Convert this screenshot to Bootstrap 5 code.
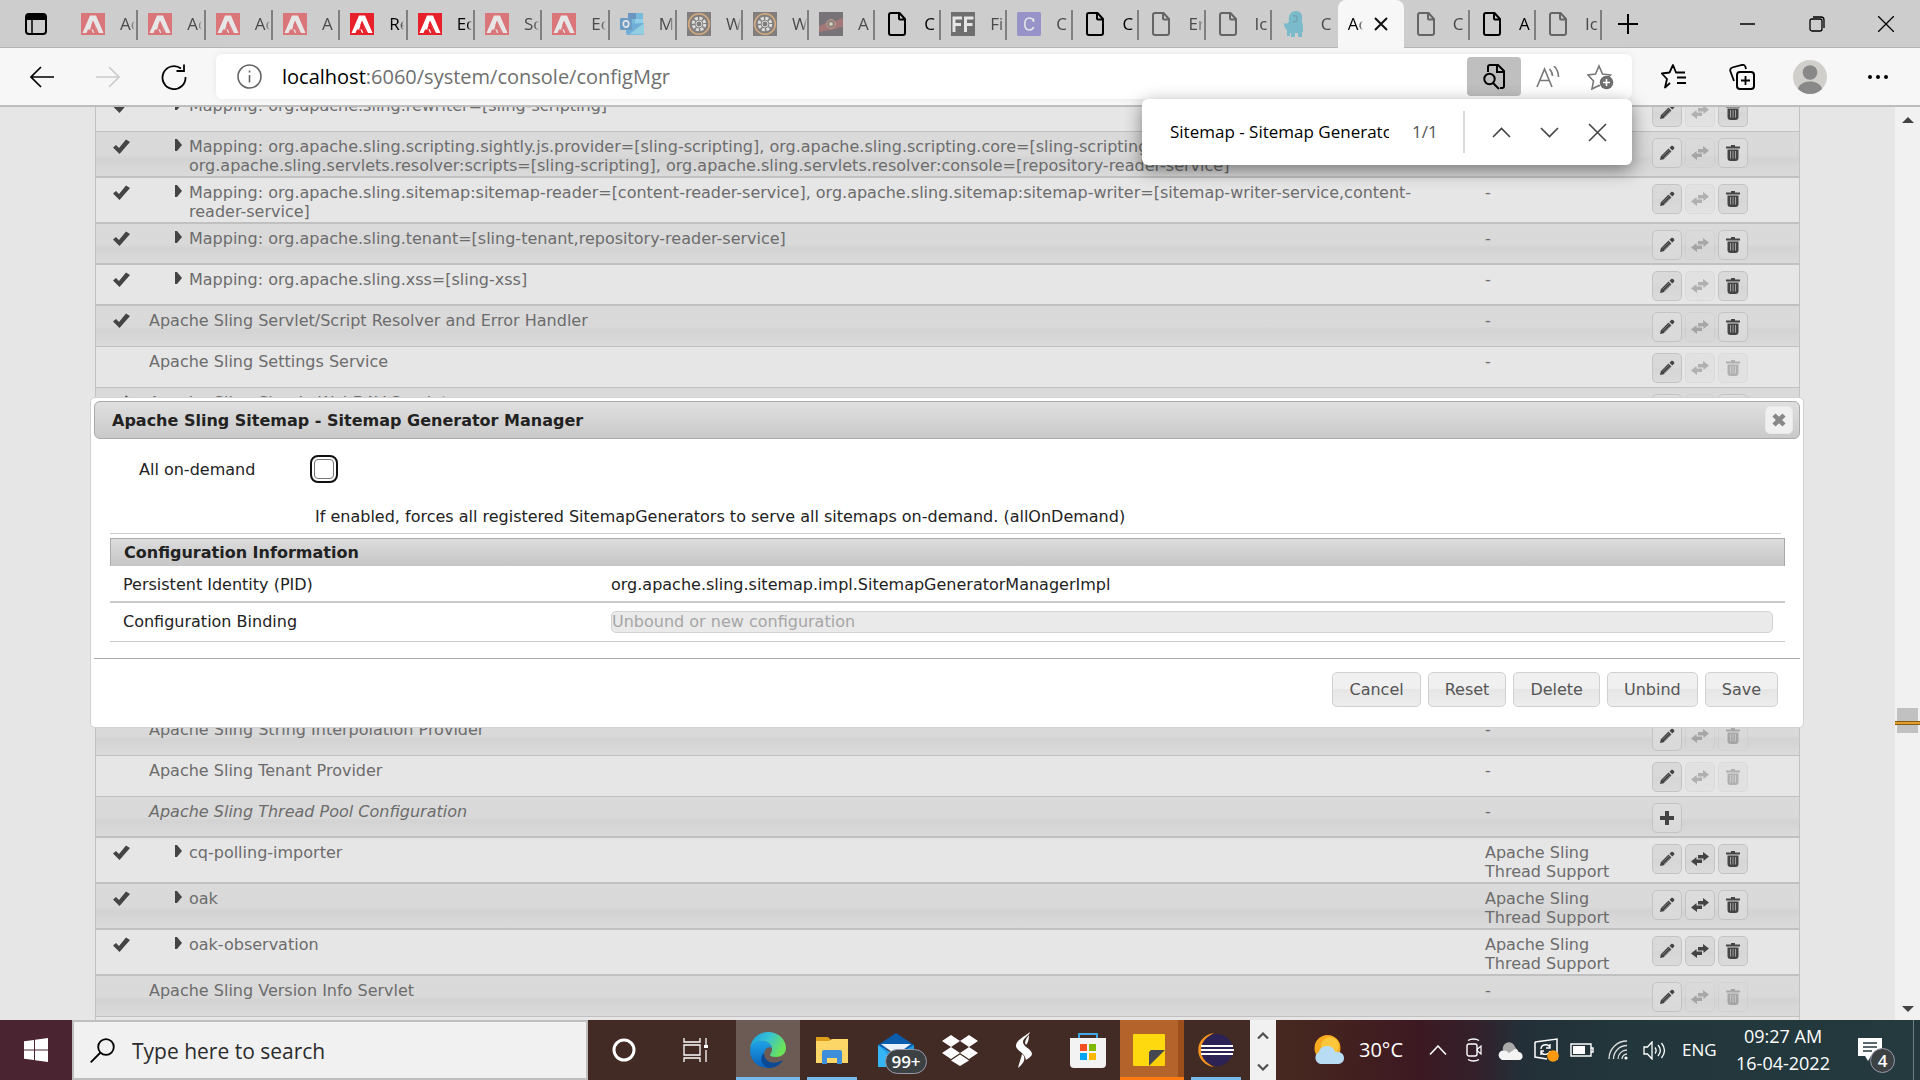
<!DOCTYPE html>
<html lang="en">
<head>
<meta charset="utf-8">
<meta name="viewport" content="width=device-width, initial-scale=1">
<title>Adobe Experience Manager Web Console - Configuration</title>
<link href="https://cdn.jsdelivr.net/npm/bootstrap@5.3.0/dist/css/bootstrap.min.css" rel="stylesheet">
<style>
:root{--ui:"Open Sans","Noto Sans",sans-serif;--console:"DejaVu Sans",Verdana,sans-serif}
body{font-family:var(--ui);overflow:hidden;background:#e6e6e6;color:#1b1b1b}
button{font-family:inherit}
svg{display:block;flex:none}
/* tab strip */
.tabstrip{height:48px;background:#cdcdcd;border-bottom:1px solid #b4b4b4}
.strip-menu{width:71px;padding-left:25px}
.tabs-a{width:31.56%}
.tabs-b{width:48.18%}
.tabitem{flex:1 1 0;min-width:0;height:47px;border:0;background:none;padding:0 0 0 10px;position:relative;font-size:17px;color:#000;text-align:left}
.tabitem::after{content:"";position:absolute;right:0;top:10px;width:2px;height:30px;background:#808080}
.tabitem.nosep::after{display:none}
.tabitem .ico{width:24px;height:24px;display:flex;justify-content:center;align-items:center}
.tabitem .cap{width:15px;margin-left:15px;overflow:hidden;white-space:nowrap;line-height:26px;-webkit-mask-image:linear-gradient(90deg,#000 70%,transparent);mask-image:linear-gradient(90deg,#000 70%,transparent)}
.tabitem.asleep .ico{opacity:.5}
.tabitem.asleep .cap{color:#4a4a4a}
.tabitem.current{background:#f7f7f7;border-radius:8px 8px 0 0;height:48px}
.tabitem.current .cap{margin-left:0;margin-right:11px}
.winbtn{width:69px;border:0;background:none;padding:0}
/* toolbar */
.toolbar{height:59px;background:#f7f7f7;border-bottom:2px solid #bdbdbd;padding:0 8px 0 9px}
.toolbtn{width:66px;height:44px;border:0;background:none;padding:0;display:flex;align-items:center;justify-content:center}
.toolbtn.roomy{width:68px}
.addr{height:45px;background:#fff;border-radius:6px;box-shadow:0 0 6px #e9e9e9;margin:0 8px 0 9px;padding:0 5px 0 21px}
.addr .url{font-size:20px;color:#6f6f6f;margin-left:20px}
.addr .url b{font-weight:400;color:#000}
.addr .find-on{width:54px;height:39px;background:#bfbfbf;border-radius:4px}
.addr .toolbtn.slim{width:53px}
.findbar{position:absolute;z-index:20;right:288px;top:99px;width:490px;height:66px;background:#fff;border-radius:6px;box-shadow:0 5px 18px rgba(0,0,0,.45);padding-left:28px}
.findbar input{width:219px;border:0;padding:0;font-size:17px;color:#000;outline:0}
.findbar .count{width:51px;margin-left:23px;font-size:17px;color:#555}
.findbar .rule{width:2px;height:42px;background:#d9d9d9;margin-right:12px}
.findbar button{width:48px;height:40px;border:0;background:none;padding:0;display:flex;align-items:center;justify-content:center}
/* console page */
.viewport{min-height:0;overflow:hidden}
.pagearea{padding:0 95px;font-family:var(--console);min-width:0}
.conf{table-layout:fixed;width:100%;margin-top:-16px;border-collapse:separate;border-spacing:0;border:solid #c2c2c2;border-width:0 1px;font-size:16px;line-height:19px;color:#6c6c6c}
.conf td{height:41px;padding:5px 0 0;vertical-align:top;border-bottom:1px solid #c0c0c0}
.conf .thick td{border-bottom-width:2px}
.conf .tall td{height:46px}
.conf .alt{background:linear-gradient(#dadada 0,#d9d9d9 50%,#d3d3d3 58%,#dbdbdb 100%)}
.conf td.gap{height:286px}
.conf .c0{width:53px}.conf .c2{width:167px}.conf .c3{width:147px}
.conf td:first-child svg{margin:2px 0 0 17px}
.conf .map{padding-left:40px;position:relative}
.conf .map svg{position:absolute;left:26px;top:7px}
.acts{gap:3px;padding-top:1px;margin-bottom:-2px}
.acts button{width:30px;height:30px;padding:0;border:1px solid #c3c3c3;border-radius:5px;background:linear-gradient(#d9d9d9 50%,#d5d5d5 50%,#dbdbdb);color:#444;display:flex;align-items:center;justify-content:center}
.alt .acts button{background:linear-gradient(#dddddd,#d9d9d9)}
.acts button:disabled{opacity:.33}
/* editor dialog */
.editor{position:absolute;z-index:5;left:90px;right:91px;top:290px;background:#fff;border:1px solid #d2d2d2;border-radius:5px;padding:3px;font-size:16px;line-height:20px;color:#222}
.editor-head{height:38px;border:1px solid #aaa;border-radius:6px;background:linear-gradient(#e0e0e0,#c9c9c9);padding:0 6px 0 17px}
.editor-head h1{font-size:16px;font-weight:700;margin:0;padding-top:2px;line-height:20px}
.editor-head button{width:28px;height:28px;padding:0;border:1px solid #e8e8e8;border-radius:5px;background:#f0f0f0;color:#888;display:flex;align-items:center;justify-content:center}
.editor-body{margin:0 15px 0 16px;height:219px}
.opt{height:95px;margin-right:4px;border-bottom:1px solid #ccc;display:grid;grid-template-columns:171px 1fr;grid-template-rows:60px 34px;align-items:center;padding-left:29px}
.opt label{padding-top:2px}
.opt p{grid-column:2;margin:0 0 0 5px;padding-top:2px}
.opt input{appearance:none;width:20px;height:20px;margin:0 0 0 4px;border:1px solid #767676;border-radius:4px;background:#fff;outline:2px solid #111;outline-offset:2px;display:block}
.info{width:100%;table-layout:fixed;border-collapse:separate;border-spacing:0;margin-top:4px}
.info .key{width:500px}
.info th{height:28px;background:linear-gradient(#dcdcdc,#c6c6c6);border:solid #aaa;border-width:1px 1px 0;padding:0 0 0 13px}
.info td{border-bottom:2px solid #cacaca;padding:2px 12px 0 13px;height:37px}
.info tr:last-child td{border-bottom-width:1px;height:39px;padding-top:0}
.info td:last-child{padding-left:1px}
.info select{appearance:none;display:block;width:100%;height:22px;border:1px solid #d3d3d3;border-radius:5px;background:#eaeaea;color:#a6a6a6;opacity:1;padding:0;font:16px/20px var(--console)}
.editor-foot{height:66px;border-top:1px solid #aaa;padding:13px 22px 0 0;gap:7px}
.editor-foot button{height:35px;padding:0 16px;border:1px solid #d0d0d0;border-radius:5px;background:linear-gradient(#f0f0f0 50%,#e6e6e6 50%,#ededed);color:#555;font-size:16px}
/* page scrollbar */
.sbar{width:25px;background:#f1f1f1;position:relative}
.sbar .thumb{position:absolute;left:2px;right:2px;top:601px;height:25px;background:#c1c1c1}
.sbar .hit{position:absolute;left:0;right:0;top:614px;height:4px;background:#e0a030;border:solid #8a5a10;border-width:1px 0}
/* taskbar */
.taskbar{height:60px;background:#432b25;color:#fff;z-index:10}
.start{width:72px;border:0;background:#4a2430;padding:0;display:flex;align-items:center;justify-content:center}
.search{width:516px;background:#f1f1f1;border:2px solid #bfbfbf;padding-left:16px}
.search input{border:0;background:none;outline:0;font-size:21px;color:#2b2b2b;margin-left:17px;padding:4px 0 0;width:380px}
.search input::placeholder{color:#2b2b2b;opacity:1}
.task{width:64px;border:0;background:none;padding:0;display:flex;align-items:center;justify-content:center;position:relative}
.task.wide{width:72px}
.task.open::after{content:"";position:absolute;bottom:0;left:7px;right:7px;height:3px;background:#76b9ed}
.task.active{background:#6b5b54}
.task.active::after{left:0;right:0}
.task.notes{background:#b4642a;border-right:6px solid #9c4f1c}
.task.notes::after{left:0;right:-6px;background:#ff7a10}
.bubble{position:absolute;background:#3c4144;border:1px solid #99a;border-radius:13px;color:#fff;text-align:center;font-weight:600}
.mail-n{left:21px;top:29px;width:42px;height:25px;font-size:17px;line-height:23px}
.scrollcol{width:26px;background:#f1f1f1;margin-left:2px;padding:12px 0 9px}
.tray{background:linear-gradient(90deg,#462920 0,#42201f 12%,#3c1922 22%,#33202a 31%,#232f38 38%,#22363b 52%,#243a3f 100%)}
.tray-i{width:36px;border:0;background:none;padding:0;display:flex;align-items:center;justify-content:center}
.temp{font-size:20px;width:61px;margin-left:15px}
.lang{font-size:17px;width:54px;padding-left:10px}
.clock{width:114px;font-size:18px;line-height:27px;padding-top:3px;text-align:center}
.noti{position:relative;width:62px;border:0;background:none;padding:0}
.noti svg{margin-left:18px}
.noti-n{left:30px;top:28px;width:25px;height:25px;font-size:17px;line-height:23px}
.peek{border-right:1px solid #6f8084;width:12px;margin-right:6px}
</style>
<script src="https://cdn.jsdelivr.net/npm/bootstrap@5.3.0/dist/js/bootstrap.bundle.min.js"></script>
</head>
<body class="vh-100 d-flex flex-column">
<svg width="0" height="0" class="position-absolute" aria-hidden="true">
  <symbol id="adobe" viewBox="0 0 24 22"><path fill="#e8202a" d="M0 0h24v22H0z"/><path fill="#fff" d="M9 2.500h6L22.500 20H18L12 7.500l-2 5h3.500L16 20h-4l-1.500-3.500H7L5.500 20H1.500z"/><path fill="#e8202a" d="M12 8.500 16.300 20h-3l-1.300-3.500H9z"/></symbol>
  <symbol id="doc" viewBox="0 0 18 24"><path fill="none" stroke="currentColor" stroke-width="2" stroke-linejoin="round" d="M3 1h8.500L17 7v14a2 2 0 0 1-2 2H3a2 2 0 0 1-2-2V3a2 2 0 0 1 2-2zM11 1v5.500a1 1 0 0 0 1 1h5"/></symbol>
  <symbol id="ring" viewBox="0 0 24 24"><path fill="#3a3230" d="M0 0h24v24H0z"/><circle cx="12" cy="12" r="10.300" fill="none" stroke="#d98b35" stroke-width="1.600"/><circle cx="12" cy="12" r="5.800" fill="none" stroke="#eee" stroke-width="3" stroke-dasharray="3 1.500"/><circle cx="12" cy="12" r="3" fill="none" stroke="#eee"/></symbol>
  <symbol id="ok" viewBox="0 0 17 15"><path fill="#444" d="M0 8.500 3 6l3 3L13 .500l4 2.500L6.500 15z"/></symbol>
  <symbol id="tri" viewBox="0 0 7 12"><path fill="#444" d="M0 0h2l5 6-5 6H0z"/></symbol>
  <symbol id="pen" viewBox="0 0 16 16"><path fill="currentColor" d="M1 15l.8-3.800L9.500 3.600l3 3L4.700 14.300zM10.500 2.700l1.800-1.800c1.500-1 3.800 1.300 2.800 2.800l-1.800 1.800z"/><path stroke="#888" stroke-width=".7" d="M3.500 11.500l6.500-6.500M5 13l6.500-6.500"/></symbol>
  <symbol id="swap" viewBox="0 0 18 14"><path fill="currentColor" d="M7 3h5V0l6 4.500-5.500 4.500V6.500H7zM11 11H6v3L0 9.500 5.500 5v2.500H11z"/></symbol>
  <symbol id="bin" viewBox="0 0 14 16"><path fill="currentColor" d="M5 0h4v1.500h5v2H0v-2h5zM1.500 4.500h11V13a3 3 0 0 1-3 3h-5a3 3 0 0 1-3-3z"/><path stroke="#aaa" stroke-width=".9" d="M4.500 6v7.500M7 6v7.500M9.500 6v7.500"/></symbol>
  <symbol id="plus" viewBox="0 0 14 14"><path fill="currentColor" d="M5 0h4v5h5v4H9v5H5V9H0V5h5z"/></symbol>
</svg>

<header class="tabstrip d-flex flex-shrink-0">
  <div class="strip-menu d-flex align-items-center flex-shrink-0">
    <svg width="22" height="22" viewBox="0 0 22 22"><rect x="1" y="1" width="20" height="20" rx="3" fill="none" stroke="#000" stroke-width="2"/><path d="M1 2h20v5H1z"/><path d="M7 6v15" stroke="#000" stroke-width="1.500"/></svg>
  </div>
  <div class="tabs-a d-flex flex-shrink-0" role="tablist">
    <button class="tabitem asleep d-flex align-items-center"><span class="ico"><svg width="24" height="22"><use href="#adobe"/></svg></span><span class="cap">Ac</span></button>
    <button class="tabitem asleep d-flex align-items-center"><span class="ico"><svg width="24" height="22"><use href="#adobe"/></svg></span><span class="cap">Ac</span></button>
    <button class="tabitem asleep d-flex align-items-center"><span class="ico"><svg width="24" height="22"><use href="#adobe"/></svg></span><span class="cap">Ac</span></button>
    <button class="tabitem asleep d-flex align-items-center"><span class="ico"><svg width="24" height="22"><use href="#adobe"/></svg></span><span class="cap">A</span></button>
    <button class="tabitem d-flex align-items-center"><span class="ico"><svg width="24" height="22"><use href="#adobe"/></svg></span><span class="cap">Re</span></button>
    <button class="tabitem d-flex align-items-center"><span class="ico"><svg width="24" height="22"><use href="#adobe"/></svg></span><span class="cap">Ec</span></button>
    <button class="tabitem asleep d-flex align-items-center"><span class="ico"><svg width="24" height="22"><use href="#adobe"/></svg></span><span class="cap">Sc</span></button>
    <button class="tabitem asleep d-flex align-items-center"><span class="ico"><svg width="24" height="22"><use href="#adobe"/></svg></span><span class="cap">Ec</span></button>
    <button class="tabitem asleep d-flex align-items-center"><span class="ico"><svg width="24" height="24" viewBox="0 0 24 24"><path fill="#28a8ea" d="M8 1h15v12H8z"/><path fill="#0a5fb4" d="M8 1h8v6H8z"/><path fill="#50d0ff" d="M15 7h8v6h-8z"/><path fill="#1490df" d="M6 12l18-1v10a2 2 0 0 1-2 2H8a2 2 0 0 1-2-2z"/><path fill="#5bd0f5" d="M24 11 9 22.500h13a2 2 0 0 0 2-2z"/><rect y="6" width="12" height="12" rx="1" fill="#0f6cbd"/><ellipse cx="6" cy="12" rx="2.700" ry="3.200" fill="none" stroke="#fff" stroke-width="1.700"/></svg></span><span class="cap">M</span></button>
  </div>
  <div class="tabs-b d-flex flex-shrink-0" role="tablist">
    <button class="tabitem asleep d-flex align-items-center"><span class="ico"><svg width="24" height="24"><use href="#ring"/></svg></span><span class="cap">W</span></button>
    <button class="tabitem asleep d-flex align-items-center"><span class="ico"><svg width="24" height="24"><use href="#ring"/></svg></span><span class="cap">W</span></button>
    <button class="tabitem asleep d-flex align-items-center"><span class="ico"><svg width="24" height="24" viewBox="0 0 24 24"><path fill="#251c26" d="M0 0h24v24H0z"/><path fill="#7d2428" d="M0 14c5-1 6-4 11-4 6 0 8-3 13-4v9c-5 0-8 3-12 3S5 19 0 20z"/><circle cx="12" cy="12" r="4.500" fill="#5c3c30" stroke="#a07050"/><circle cx="12" cy="12" r="1.700" fill="#ddb"/></svg></span><span class="cap">A</span></button>
    <button class="tabitem d-flex align-items-center"><span class="ico"><svg width="18" height="24"><use href="#doc"/></svg></span><span class="cap">C</span></button>
    <button class="tabitem asleep d-flex align-items-center"><span class="ico"><svg width="24" height="24" viewBox="0 0 24 24"><path fill="#111" d="M0 0h24v24H0z"/><path fill="none" stroke="#fff" stroke-width="3" d="M3 20V6h8M3 12.500h7M14.500 20V6h8M14.500 12.500h7"/></svg></span><span class="cap">Fi</span></button>
    <button class="tabitem asleep d-flex align-items-center"><span class="ico"><svg width="24" height="24" viewBox="0 0 24 24"><rect width="24" height="24" rx="2" fill="#6258c4"/><path fill="none" stroke="#fff" stroke-width="1.600" d="M16.500 10V6.500M16.500 9c-.7-2-2.200-3-4.200-3-3 0-4.500 2.500-4.500 6s1.500 6 4.500 6c2 0 3.700-1 4.400-3"/></svg></span><span class="cap">C</span></button>
    <button class="tabitem d-flex align-items-center"><span class="ico"><svg width="18" height="24"><use href="#doc"/></svg></span><span class="cap">C</span></button>
    <button class="tabitem asleep d-flex align-items-center"><span class="ico"><svg width="18" height="24"><use href="#doc"/></svg></span><span class="cap">Er</span></button>
    <button class="tabitem asleep d-flex align-items-center"><span class="ico"><svg width="18" height="24"><use href="#doc"/></svg></span><span class="cap">Ic</span></button>
    <button class="tabitem asleep nosep d-flex align-items-center"><span class="ico"><svg width="20" height="26" viewBox="0 0 20 26"><path fill="#2ba8c8" d="M5 10C4 4 7 0 12 0c4 0 7 3 6 8-.5 3 1 5 1 8v5h-1v5h-4v-4h-3v4H7v-4H6v3H3v-6c-2-1-3-4-3-7 2 1 4 1 5-2z"/><path fill="none" stroke="#176f8c" stroke-width="1.200" d="M9 5c3-1 5 1 4 4-.5 1.500-2 2-4 2"/></svg></span><span class="cap">C</span></button>
    <button class="tabitem current nosep d-flex align-items-center" aria-selected="true"><span class="cap">Ac</span>
      <svg width="14" height="14" viewBox="0 0 14 14"><path d="M1 1l12 12M13 1 1 13" stroke="#111" stroke-width="2"/></svg></button>
    <button class="tabitem asleep d-flex align-items-center"><span class="ico"><svg width="18" height="24"><use href="#doc"/></svg></span><span class="cap">C</span></button>
    <button class="tabitem d-flex align-items-center"><span class="ico"><svg width="18" height="24"><use href="#doc"/></svg></span><span class="cap">A</span></button>
    <button class="tabitem asleep d-flex align-items-center"><span class="ico"><svg width="18" height="24"><use href="#doc"/></svg></span><span class="cap">Ic</span></button>
  </div>
  <button class="winbtn d-flex align-items-center ps-3" aria-label="New tab"><svg width="20" height="20" viewBox="0 0 20 20"><path d="M10 0v20M0 10h20" stroke="#000" stroke-width="2"/></svg></button>
  <div class="ms-auto d-flex">
    <button class="winbtn d-flex align-items-center justify-content-center" aria-label="Minimize"><svg width="15" height="2"><path d="M0 1h15" stroke="#000" stroke-width="1.500"/></svg></button>
    <button class="winbtn d-flex align-items-center justify-content-center" aria-label="Restore"><svg width="16" height="16" viewBox="0 0 16 16"><rect x="1" y="3" width="12" height="12" rx="2" fill="none" stroke="#000" stroke-width="1.300"/><path d="M4 1h8a3 3 0 0 1 3 3v8" fill="none" stroke="#000" stroke-width="1.300"/></svg></button>
    <button class="winbtn d-flex align-items-center justify-content-center" aria-label="Close"><svg width="16" height="16" viewBox="0 0 16 16"><path d="M0 0l16 16M16 0 0 16" stroke="#000" stroke-width="1.300"/></svg></button>
  </div>
</header>

<nav class="toolbar d-flex align-items-center flex-shrink-0" aria-label="Browser toolbar">
  <button class="toolbtn" aria-label="Back"><svg width="24" height="22" viewBox="0 0 24 22"><path d="M24 11H1M11 1 1 11l10 10" fill="none" stroke="#000" stroke-width="1.700"/></svg></button>
  <button class="toolbtn" aria-label="Forward" disabled><svg width="24" height="22" viewBox="0 0 24 22"><path d="M0 11h23M13 1l10 10-10 10" fill="none" stroke="#ccc" stroke-width="1.700"/></svg></button>
  <button class="toolbtn" aria-label="Reload"><svg width="26" height="26" viewBox="0 0 26 26"><path d="M24.500 13A11.500 11.500 0 1 1 20 4.500M23 .500V7h-7.500" fill="none" stroke="#000" stroke-width="1.800"/></svg></button>
  <div class="addr d-flex align-items-center flex-grow-1">
    <svg width="25" height="25" viewBox="0 0 25 25"><circle cx="12.500" cy="12.500" r="11.500" fill="none" stroke="#666" stroke-width="1.600"/><path d="M12.500 11v7.500M12.500 6.500v2" stroke="#666" stroke-width="1.600"/></svg>
    <span class="url flex-grow-1"><b>localhost</b>:6060/system/console/configMgr</span>
    <button class="toolbtn find-on" aria-label="Find on page"><svg width="22" height="26" viewBox="0 0 22 26"><path d="M5 8V3a2 2 0 0 1 2-2h8l6 6v15a2 2 0 0 1-2 2h-2M14 1v7h7" fill="none" stroke="#000" stroke-width="2"/><circle cx="6.500" cy="15" r="5.200" fill="none" stroke="#000" stroke-width="2"/><path d="M10 19l6 6" stroke="#000" stroke-width="2"/></svg></button>
    <button class="toolbtn slim" aria-label="Read aloud"><svg width="24" height="22" viewBox="0 0 24 22"><path d="M1 21 8.500 3 16 21M4 14.500h9M13.500 3c2 2 3 4 3 7M18 0c3 3 4.500 6 4.500 11" fill="none" stroke="#777" stroke-width="1.600"/></svg></button>
    <button class="toolbtn slim" aria-label="Add to favorites"><svg width="27" height="26" viewBox="0 0 27 26"><path d="M13 22l-1-.5-7 3.500 1.500-8L1 11l7.500-1L12 2l3.500 8 8 1-2 2" fill="none" stroke="#777" stroke-width="1.600"/><circle cx="19.500" cy="18.500" r="6.800" fill="#6e6e6e"/><path d="M19.500 15v7M16 18.500h7" stroke="#fff" stroke-width="1.600"/></svg></button>
  </div>
  <button class="toolbtn roomy" aria-label="Favorites"><svg width="26" height="25" viewBox="0 0 26 25"><path d="M9 19l-5 4.500L6 15 .8 9.500l7.700-1L12 1l3 7.500h9M16 13.500h9M16 19h9" fill="none" stroke="#000" stroke-width="1.800" stroke-linejoin="round"/></svg></button>
  <button class="toolbtn roomy" aria-label="Collections"><svg width="26" height="26" viewBox="0 0 26 26"><rect x="8" y="8" width="17" height="17" rx="3" fill="none" stroke="#000" stroke-width="2"/><path d="M16.500 12v9M12 16.500h9M5 17 1.300 7a3 3 0 0 1 2-3.500L13 1a3 3 0 0 1 3.500 2l.5 2" fill="none" stroke="#000" stroke-width="1.800"/></svg></button>
  <button class="toolbtn roomy" aria-label="Profile"><svg width="34" height="34" viewBox="0 0 34 34"><circle cx="17" cy="17" r="17" fill="#d0cfcb"/><circle cx="17" cy="12.500" r="7.300" fill="#888"/><path d="M5 29c2-10 22-10 24 0a17 17 0 0 1-24 0z" fill="#888"/></svg></button>
  <button class="toolbtn roomy" aria-label="Settings and more"><svg width="20" height="4" viewBox="0 0 20 4"><circle cx="2" cy="2" r="2"/><circle cx="10" cy="2" r="2"/><circle cx="18" cy="2" r="2"/></svg></button>
</nav>

<form class="findbar d-flex align-items-center" onsubmit="return false">
  <input type="text" aria-label="Find on page" value="Sitemap - Sitemap Generator Manager">
  <span class="count">1/1</span><span class="rule"></span>
  <button type="button" aria-label="Previous"><svg width="19" height="11" viewBox="0 0 19 11"><path d="M1 10 9.500 1.500 18 10" fill="none" stroke="#444" stroke-width="1.600"/></svg></button>
  <button type="button" aria-label="Next"><svg width="19" height="11" viewBox="0 0 19 11"><path d="M1 1l8.500 8.500L18 1" fill="none" stroke="#444" stroke-width="1.600"/></svg></button>
  <button type="button" aria-label="Close"><svg width="19" height="19" viewBox="0 0 19 19"><path d="M1 1l17 17M18 1 1 18" stroke="#444" stroke-width="1.600"/></svg></button>
</form>

<main class="viewport d-flex flex-grow-1 position-relative">
  <div class="pagearea flex-grow-1 position-relative">
    <table class="conf">
      <colgroup><col class="c0"><col><col class="c2"><col class="c3"></colgroup>
      <tbody>
      <tr><td><svg width="17" height="15"><use href="#ok"/></svg></td><td class="map"><svg width="7" height="12"><use href="#tri"/></svg>Mapping: org.apache.sling.rewriter=[sling-scripting]</td><td>-</td><td><div class="acts d-flex"><button><svg width="16" height="16"><use href="#pen"/></svg></button><button disabled><svg width="18" height="14"><use href="#swap"/></svg></button><button><svg width="14" height="16"><use href="#bin"/></svg></button></div></td></tr>
      <tr class="alt thick tall"><td><svg width="17" height="15"><use href="#ok"/></svg></td><td class="map"><svg width="7" height="12"><use href="#tri"/></svg>Mapping: org.apache.sling.scripting.sightly.js.provider=[sling-scripting], org.apache.sling.scripting.core=[sling-scripting],<br>org.apache.sling.servlets.resolver:scripts=[sling-scripting], org.apache.sling.servlets.resolver:console=[repository-reader-service]</td><td>-</td><td><div class="acts d-flex"><button><svg width="16" height="16"><use href="#pen"/></svg></button><button disabled><svg width="18" height="14"><use href="#swap"/></svg></button><button><svg width="14" height="16"><use href="#bin"/></svg></button></div></td></tr>
      <tr class="thick tall"><td><svg width="17" height="15"><use href="#ok"/></svg></td><td class="map"><svg width="7" height="12"><use href="#tri"/></svg>Mapping: org.apache.sling.sitemap:sitemap-reader=[content-reader-service], org.apache.sling.sitemap:sitemap-writer=[sitemap-writer-service,content-<br>reader-service]</td><td>-</td><td><div class="acts d-flex"><button><svg width="16" height="16"><use href="#pen"/></svg></button><button disabled><svg width="18" height="14"><use href="#swap"/></svg></button><button><svg width="14" height="16"><use href="#bin"/></svg></button></div></td></tr>
      <tr class="alt thick"><td><svg width="17" height="15"><use href="#ok"/></svg></td><td class="map"><svg width="7" height="12"><use href="#tri"/></svg>Mapping: org.apache.sling.tenant=[sling-tenant,repository-reader-service]</td><td>-</td><td><div class="acts d-flex"><button><svg width="16" height="16"><use href="#pen"/></svg></button><button disabled><svg width="18" height="14"><use href="#swap"/></svg></button><button><svg width="14" height="16"><use href="#bin"/></svg></button></div></td></tr>
      <tr class="thick"><td><svg width="17" height="15"><use href="#ok"/></svg></td><td class="map"><svg width="7" height="12"><use href="#tri"/></svg>Mapping: org.apache.sling.xss=[sling-xss]</td><td>-</td><td><div class="acts d-flex"><button><svg width="16" height="16"><use href="#pen"/></svg></button><button disabled><svg width="18" height="14"><use href="#swap"/></svg></button><button><svg width="14" height="16"><use href="#bin"/></svg></button></div></td></tr>
      <tr class="alt"><td><svg width="17" height="15"><use href="#ok"/></svg></td><td>Apache Sling Servlet/Script Resolver and Error Handler</td><td>-</td><td><div class="acts d-flex"><button><svg width="16" height="16"><use href="#pen"/></svg></button><button disabled><svg width="18" height="14"><use href="#swap"/></svg></button><button><svg width="14" height="16"><use href="#bin"/></svg></button></div></td></tr>
      <tr><td></td><td>Apache Sling Settings Service</td><td>-</td><td><div class="acts d-flex"><button><svg width="16" height="16"><use href="#pen"/></svg></button><button disabled><svg width="18" height="14"><use href="#swap"/></svg></button><button disabled><svg width="14" height="16"><use href="#bin"/></svg></button></div></td></tr>
      <tr class="alt"><td><svg width="17" height="15"><use href="#ok"/></svg></td><td>Apache Sling Simple WebDAV Servlet</td><td>-</td><td><div class="acts d-flex"><button><svg width="16" height="16"><use href="#pen"/></svg></button><button disabled><svg width="18" height="14"><use href="#swap"/></svg></button><button><svg width="14" height="16"><use href="#bin"/></svg></button></div></td></tr>
      <tr><td class="gap" colspan="4"></td></tr>
      <tr class="alt"><td></td><td>Apache Sling String Interpolation Provider</td><td>-</td><td><div class="acts d-flex"><button><svg width="16" height="16"><use href="#pen"/></svg></button><button disabled><svg width="18" height="14"><use href="#swap"/></svg></button><button disabled><svg width="14" height="16"><use href="#bin"/></svg></button></div></td></tr>
      <tr><td></td><td>Apache Sling Tenant Provider</td><td>-</td><td><div class="acts d-flex"><button><svg width="16" height="16"><use href="#pen"/></svg></button><button disabled><svg width="18" height="14"><use href="#swap"/></svg></button><button disabled><svg width="14" height="16"><use href="#bin"/></svg></button></div></td></tr>
      <tr class="alt thick"><td></td><td><em>Apache Sling Thread Pool Configuration</em></td><td>-</td><td><div class="acts d-flex"><button><svg width="14" height="14"><use href="#plus"/></svg></button></div></td></tr>
      <tr class="thick tall"><td><svg width="17" height="15"><use href="#ok"/></svg></td><td class="map"><svg width="7" height="12"><use href="#tri"/></svg>cq-polling-importer</td><td>Apache Sling<br>Thread Support</td><td><div class="acts d-flex"><button><svg width="16" height="16"><use href="#pen"/></svg></button><button><svg width="18" height="14"><use href="#swap"/></svg></button><button><svg width="14" height="16"><use href="#bin"/></svg></button></div></td></tr>
      <tr class="alt thick tall"><td><svg width="17" height="15"><use href="#ok"/></svg></td><td class="map"><svg width="7" height="12"><use href="#tri"/></svg>oak</td><td>Apache Sling<br>Thread Support</td><td><div class="acts d-flex"><button><svg width="16" height="16"><use href="#pen"/></svg></button><button><svg width="18" height="14"><use href="#swap"/></svg></button><button><svg width="14" height="16"><use href="#bin"/></svg></button></div></td></tr>
      <tr class="thick tall"><td><svg width="17" height="15"><use href="#ok"/></svg></td><td class="map"><svg width="7" height="12"><use href="#tri"/></svg>oak-observation</td><td>Apache Sling<br>Thread Support</td><td><div class="acts d-flex"><button><svg width="16" height="16"><use href="#pen"/></svg></button><button><svg width="18" height="14"><use href="#swap"/></svg></button><button><svg width="14" height="16"><use href="#bin"/></svg></button></div></td></tr>
      <tr class="alt"><td></td><td>Apache Sling Version Info Servlet</td><td>-</td><td><div class="acts d-flex"><button><svg width="16" height="16"><use href="#pen"/></svg></button><button disabled><svg width="18" height="14"><use href="#swap"/></svg></button><button disabled><svg width="14" height="16"><use href="#bin"/></svg></button></div></td></tr>
      <tr><td></td><td></td><td></td><td></td></tr>
      </tbody>
    </table>

    <section class="editor" role="dialog" aria-labelledby="editorTitle">
      <div class="editor-head d-flex align-items-center justify-content-between">
        <h1 id="editorTitle">Apache Sling Sitemap - Sitemap Generator Manager</h1>
        <button aria-label="Close"><svg width="14" height="14" viewBox="0 0 14 14"><path d="M2 2l10 10M12 2 2 12" stroke="currentColor" stroke-width="4.500"/></svg></button>
      </div>
      <div class="editor-body">
        <div class="opt">
          <label for="allOnDemand">All on-demand</label>
          <input type="checkbox" id="allOnDemand">
          <p>If enabled, forces all registered SitemapGenerators to serve all sitemaps on-demand. (allOnDemand)</p>
        </div>
        <table class="info">
          <colgroup><col class="key"><col></colgroup>
          <tr><th colspan="2">Configuration Information</th></tr>
          <tr><td>Persistent Identity (PID)</td><td>org.apache.sling.sitemap.impl.SitemapGeneratorManagerImpl</td></tr>
          <tr><td><label for="binding">Configuration Binding</label></td><td><select id="binding" disabled><option>Unbound or new configuration</option></select></td></tr>
        </table>
      </div>
      <div class="editor-foot d-flex justify-content-end align-items-start">
        <button>Cancel</button><button>Reset</button><button>Delete</button><button>Unbind</button><button>Save</button>
      </div>
    </section>
  </div>
  <div class="sbar d-flex flex-column justify-content-between align-items-center flex-shrink-0">
    <svg class="mt-2" width="12" height="10" viewBox="0 0 12 6"><path d="M0 6l6-6 6 6z" fill="#444"/></svg>
    <span class="thumb"></span><span class="hit"></span>
    <svg class="mb-2" width="12" height="6" viewBox="0 0 12 6"><path d="M0 0l6 6 6-6z" fill="#444"/></svg>
  </div>
</main>

<footer class="taskbar d-flex flex-shrink-0">
  <button class="start" aria-label="Start"><svg width="24" height="24" viewBox="0 0 24 24"><path fill="#fff" d="M0 3.300 10 2v9.500H0zM11 1.800 24 0v11.500H11zM0 12.500h10V22L0 20.700zM11 12.500h13V24l-13-1.800z"/></svg></button>
  <div class="search d-flex align-items-center">
    <svg width="25" height="25" viewBox="0 0 25 25"><circle cx="16" cy="9" r="7.800" fill="none" stroke="#000" stroke-width="1.800"/><path d="M10.500 14.500.7 24.300" stroke="#000" stroke-width="1.800"/></svg>
    <input type="text" aria-label="Search" placeholder="Type here to search">
  </div>
  <button class="task wide" aria-label="Cortana"><svg width="24" height="24"><circle cx="12" cy="12" r="10" fill="none" stroke="#fff" stroke-width="3"/></svg></button>
  <button class="task wide" aria-label="Task view"><svg width="26" height="24" viewBox="0 0 26 24"><path fill="none" stroke="#fff" stroke-width="1.300" d="M1 0v4h16V0M1 7h16v10H1zM1 24v-4h16v4M23 0v7M23 12v12"/><path fill="#fff" d="M21 7h4v3h-4z"/></svg></button>
  <button class="task open active ms-1" aria-label="Microsoft Edge"><svg width="36" height="36" viewBox="0 0 36 36"><defs><linearGradient id="eg" x1="0" x2="1" y2=".4"><stop stop-color="#1797d8"/><stop offset=".5" stop-color="#35c1d8"/><stop offset="1" stop-color="#6be35a"/></linearGradient><linearGradient id="eb" x2="0" y2="1"><stop stop-color="#1fa3e8"/><stop offset="1" stop-color="#0b5fb8"/></linearGradient></defs><path fill="url(#eg)" d="M0 17C1 6 9 0 18 0c11 0 18 8 18 16 0 6-5 9-10 9-4 0-6-1-6-2s2-2 2-6c0-5-5-8-10-8C6 9 1 13 0 17z"/><path fill="url(#eb)" d="M0 18c1-6 6-9 11-9 6 0 10 3 11 7-3-2-8 0-8 7 0 6 6 12 16 8-3 3-7 5-12 5C8 36 0 29 0 18z"/><path fill="#0d4a96" d="M14 21c0 8 8 13 19 7-4 7-10 8-15 8-7-3-9-11-4-15z"/></svg></button>
  <button class="task open" aria-label="File Explorer"><svg width="32" height="28" viewBox="0 0 32 28"><path fill="#dd9f1b" d="M0 1h12l3 3v4H0z"/><path fill="#fcd667" d="M0 5h13l3-2h16v24H0z"/><path fill="#3c8fd8" d="M6 28V16a2 2 0 0 1 2-2h16a2 2 0 0 1 2 2v12h-5v-6H11v6z"/></svg></button>
  <button class="task" aria-label="Mail"><svg width="36" height="34" viewBox="0 0 36 34"><path fill="#0b5cad" d="M0 12 18 0l18 12v4H0z"/><path fill="#1f9be6" d="M0 12l18 10 18-10v22H0z"/><path fill="#35b5f4" d="M0 12l24 22H0z"/><path fill="#e8f2fa" d="M3 11h30L18 22z"/></svg><span class="bubble mail-n">99+</span></button>
  <button class="task" aria-label="Dropbox"><svg width="36" height="31" viewBox="0 0 36 31"><path fill="#fff" d="M9 0l9 6-9 6-9-6zM27 0l9 6-9 6-9-6zM9 12l9 6-9 6-9-6zM27 12l9 6-9 6-9-6zM18 19.500l9 6-9 5.500-9-5.500z"/></svg></button>
  <button class="task" aria-label="Shortcut app"><svg width="18" height="36" viewBox="0 0 18 36"><path fill="#fff" d="M15 0C9 5 1 8 1 14c0 4 8 7 9 11l1 3c3-2 6-4 6-6 0-5-9-7-9-12 0-4 6-6 7-10zM14 3c-2 3-4 5-4 8l1 2c2-2 3-6 3-10zM3 36c6-5 7-8 6-12l-2-2c-1 5-3 9-4 14z"/></svg></button>
  <button class="task" aria-label="Microsoft Store"><svg width="36" height="36" viewBox="0 0 36 36"><path fill="none" stroke="#3fa9e8" stroke-width="2" d="M9 8V2h18v6"/><path fill="#f3f3f3" d="M0 6h36v26a4 4 0 0 1-4 4H4a4 4 0 0 1-4-4z"/><path fill="#f25022" d="M10 12h7v7h-7z"/><path fill="#7fba00" d="M19 12h7v7h-7z"/><path fill="#00a4ef" d="M10 21h7v7h-7z"/><path fill="#ffb900" d="M19 21h7v7h-7z"/></svg></button>
  <button class="task open notes" aria-label="Sticky Notes"><svg width="32" height="32" viewBox="0 0 32 32"><rect width="32" height="32" rx="1" fill="#ffd90f"/><path fill="#454850" d="M16 32V18l2-2h14z"/><path fill="#f2b800" d="M16 31 32 16v14a2 2 0 0 1-2 2H16z" opacity=".25"/></svg></button>
  <button class="task open" aria-label="Eclipse"><svg width="36" height="34" viewBox="0 0 36 34"><path fill="#f7941e" d="M16 0C-5 3-5 31 16 34 1 27 1 7 16 0z"/><ellipse cx="19" cy="17" rx="16" ry="16" fill="#2c2255"/><path stroke="#fff" stroke-width="2.200" d="M3 13h32M3 17h33M3 21h32"/></svg></button>
  <div class="scrollcol d-flex flex-column justify-content-between align-items-center">
    <svg width="12" height="7" viewBox="0 0 12 7"><path d="M1 6.500 6 1.500l5 5" fill="none" stroke="#505050" stroke-width="2.200"/></svg>
    <svg width="12" height="7" viewBox="0 0 12 7"><path d="M1 .500l5 5 5-5" fill="none" stroke="#505050" stroke-width="2.200"/></svg>
  </div>
  <div class="tray d-flex flex-grow-1 align-items-stretch justify-content-end">
    <div class="d-flex align-items-center">
      <svg width="30" height="30" viewBox="0 0 30 30"><circle cx="13.500" cy="13" r="13" fill="#f9a91f"/><circle cx="16" cy="11" r="9" fill="#fcc63a"/><path fill="#b9dcf5" d="M6 29a6.500 6.500 0 0 1-1-12c1-4 4-6 8-6 4 0 7 2 8 6 5-1 9 2 9 6s-3 6-7 6z"/></svg>
      <span class="temp">30°C</span>
    </div>
    <button class="tray-i" aria-label="Show hidden icons"><svg width="18" height="10" viewBox="0 0 18 10"><path d="M1 9.500 9 1l8 8.500" fill="none" stroke="#fff" stroke-width="1.500"/></svg></button>
    <button class="tray-i" aria-label="Meet now"><svg width="16" height="24" viewBox="0 0 16 24"><path d="M2 2.500C5 .5 10 .5 13 2.500M2 21.500c3 2 8 2 11 0" fill="none" stroke="#fff" stroke-width="1.400"/><rect x="1" y="6" width="10" height="12" rx="2" fill="none" stroke="#fff" stroke-width="1.400"/><path d="M11.500 11 15 8v8l-3.500-3z" fill="none" stroke="#fff" stroke-width="1.200"/></svg></button>
    <button class="tray-i" aria-label="OneDrive"><svg width="25" height="19" viewBox="0 0 25 19"><path fill="#aaa" d="M5 9a6 6 0 0 1 12-3l4 5-12 2z"/><path fill="#f4f4f4" d="M4 19a5 5 0 0 1-1-9c4-1 6 0 8 2l6-4c2 0 3 1 3 3 6 0 6 8 1 8z"/></svg></button>
    <button class="tray-i" aria-label="Windows Update"><svg width="25" height="24" viewBox="0 0 25 24"><path d="M1 4 23 1v20l-7 0M1 4v15l12 2" fill="none" stroke="#fff" stroke-width="1.500"/><path d="M7 11c0-5 8-6 9-1M16 6v4h-4M16 13c-1 4-8 5-9 0M7 17v-4h3" fill="none" stroke="#fff" stroke-width="1.400"/><circle cx="19" cy="18" r="5.800" fill="#ff9a10"/></svg></button>
    <button class="tray-i" aria-label="Battery"><svg width="24" height="14" viewBox="0 0 24 14"><path d="M1 1h20v12H1zM21.500 5H23v4h-1.500" fill="none" stroke="#fff" stroke-width="1.400"/><path fill="#fff" d="M3 3h12v8H3z"/></svg></button>
    <button class="tray-i" aria-label="Network"><svg width="20" height="20" viewBox="0 0 20 20"><path d="M1 19C1 9 9 1 19 1M5.500 19C5.500 11.500 11.500 5.500 19 5.500M10 19c0-5 4-9 9-9M14 19a5 5 0 0 1 5-5" fill="none" stroke="#ddd" stroke-width="1.300"/><circle cx="18" cy="18" r="1.600" fill="#fff"/></svg></button>
    <button class="tray-i" aria-label="Volume"><svg width="23" height="19" viewBox="0 0 23 19"><path d="M1 6h3.500L9 1v17l-4.500-5H1zM12 6.500c1.500 2 1.500 4 0 6M15 4c3 3.500 3 7.500 0 11M18.500 2c4 5 4 10 0 15" fill="none" stroke="#fff" stroke-width="1.300"/></svg></button>
    <span class="lang align-self-center">ENG</span>
    <div class="clock">09:27 AM<br>16-04-2022</div>
    <button class="noti" aria-label="Notifications"><svg width="24" height="24" viewBox="0 0 24 24"><path fill="#fff" d="M0 0h24v18H13l-3 5-3-5H0z"/><path stroke="#26383c" stroke-width="1.400" d="M5 5h14M5 9h14M5 13h9"/></svg><span class="bubble noti-n">4</span></button>
    <span class="peek"></span>
  </div>
</footer>
</body>
</html>
